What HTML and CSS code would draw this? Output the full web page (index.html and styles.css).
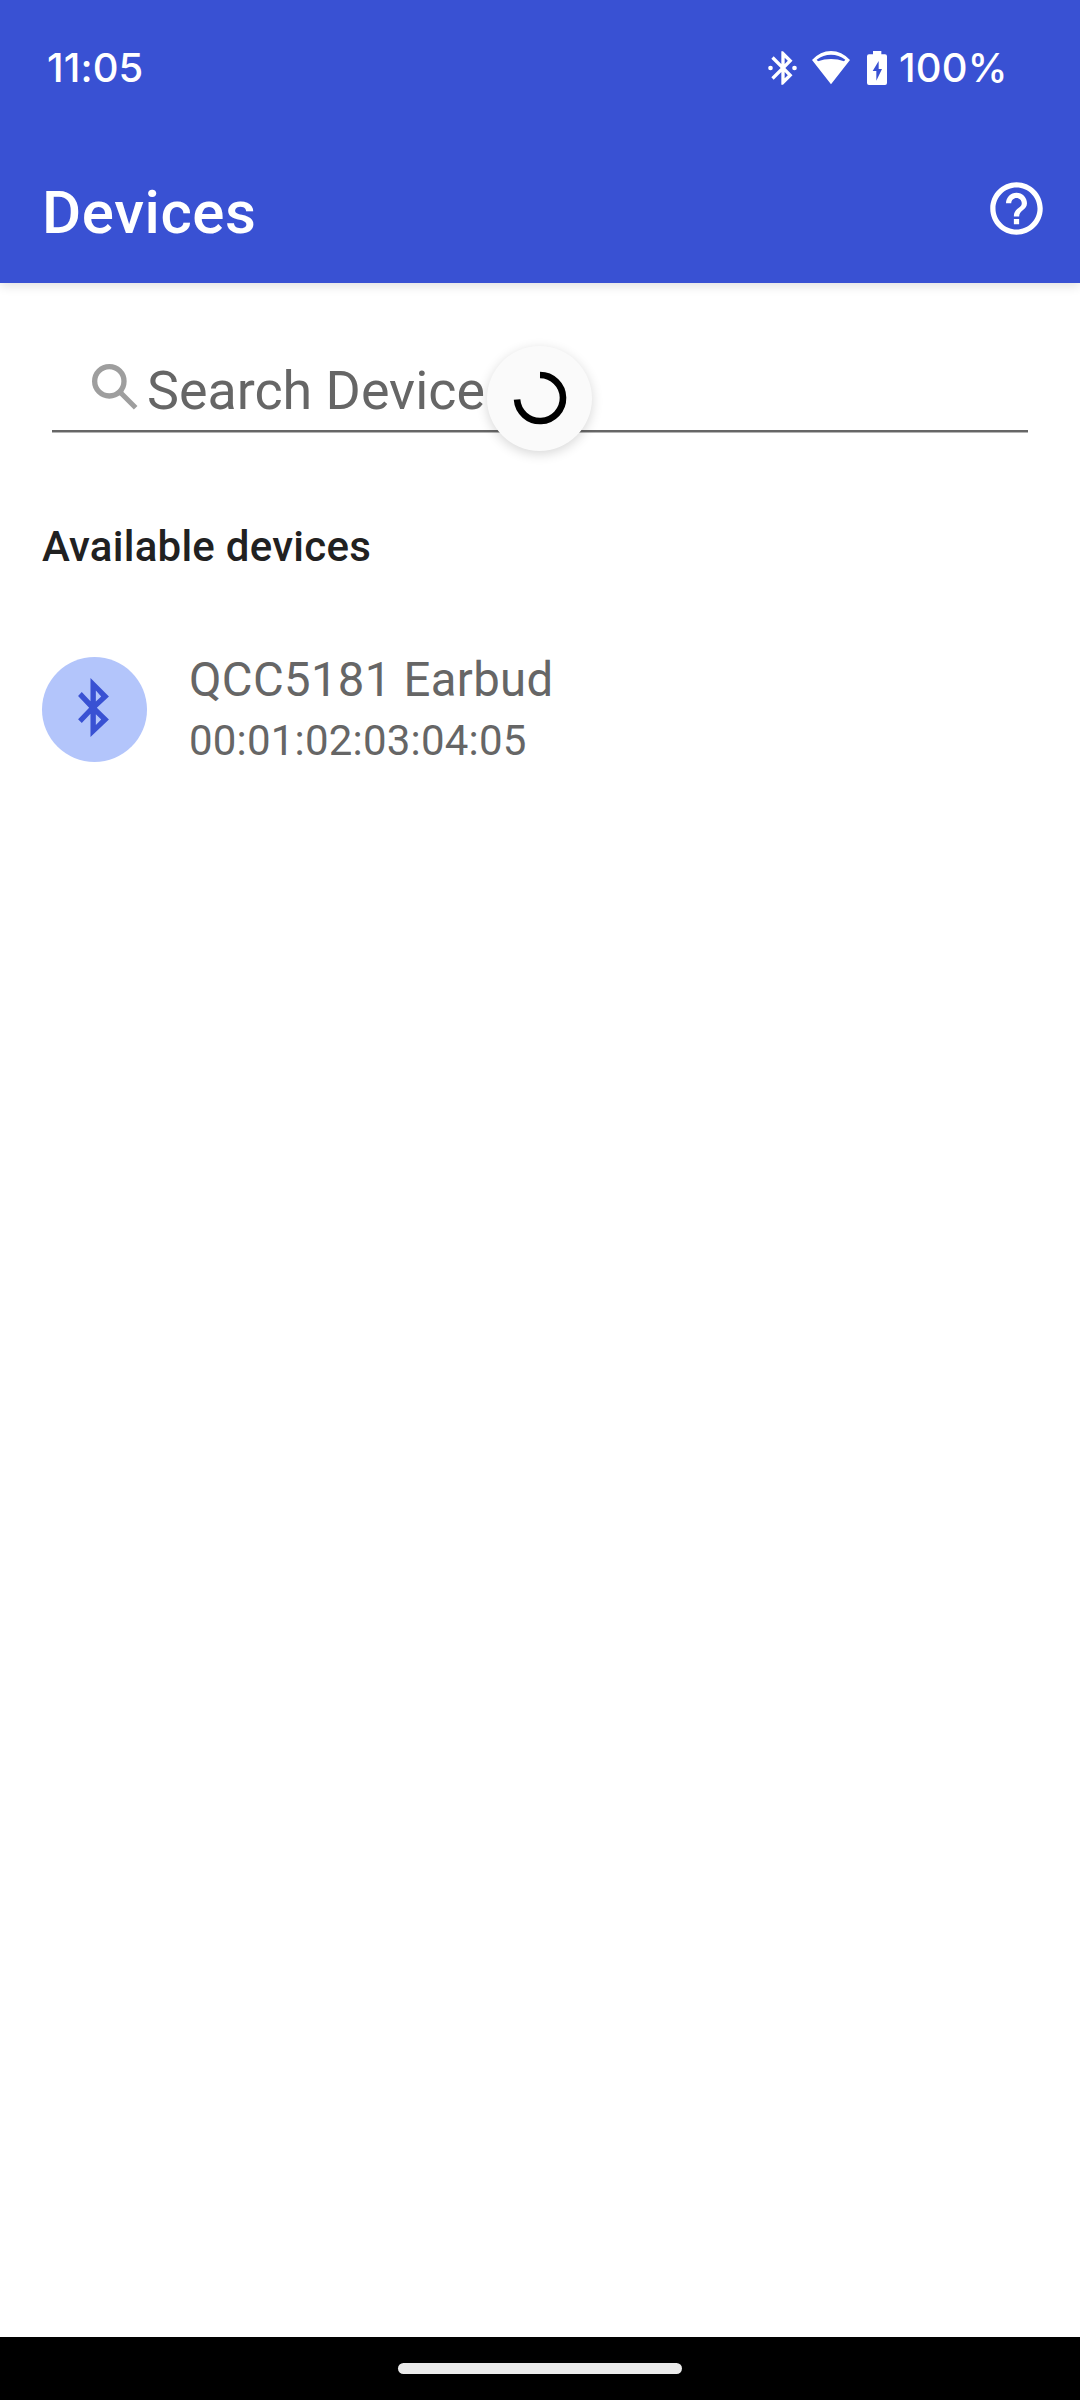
FILE: index.html
```html
<!DOCTYPE html>
<html lang="en">
<head>
<meta charset="utf-8">
<title>Devices</title>
<link rel="stylesheet" href="styles.css">
</head>
<body>
<div class="screen">
  <header class="header">
    <div class="status-bar">
      <span class="clock">11:05</span>
      <div class="status-icons">
        <svg class="status-bluetooth" viewBox="0 0 24 24"><path fill-rule="evenodd" d="M17.71 7.71L12 2h-1v7.59L6.41 5 5 6.41 10.59 12 5 17.59 6.41 19 11 14.41V22h1l5.71-5.71-4.3-4.29 4.3-4.29zM13 5.83l1.88 1.88L13 9.59V5.83zm1.88 10.46L13 18.17v-3.76l1.88 1.88z"/><circle cx="4.5" cy="12" r="1.4"/><circle cx="18.9" cy="12" r="1.4"/></svg>
        <svg class="status-wifi" viewBox="0 0 114 100"><path fill-rule="evenodd" d="M0 27Q25 0 57 0T114 27L57 100ZM18 31Q36 24 57 24T96 31L100 26Q80 11 57 11T14 26Z"/></svg>
        <svg class="status-battery" viewBox="0 0 60 102"><path fill-rule="evenodd" d="M18 0H43V10H54Q60 10 60 16V96Q60 102 54 102H6Q0 102 0 96V16Q0 10 6 10H18ZM35 30L17 60H28V89L45 54H35Z"/></svg>
        <span class="battery-level">100%</span>
      </div>
    </div>
    <div class="app-bar">
      <h1 class="title">Devices</h1>
      <svg class="help" viewBox="0 0 24 24"><path d="M11 18h2v-2h-2v2zm1-16C6.48 2 2 6.48 2 12s4.48 10 10 10 10-4.48 10-10S17.52 2 12 2zm0 18c-4.41 0-8-3.59-8-8s3.59-8 8-8 8 3.59 8 8-3.59 8-8 8zm0-14c-2.21 0-4 1.79-4 4h2c0-1.1.9-2 2-2s2 .9 2 2c0 2-3 1.75-3 5h2c0-2.25 3-2.5 3-5 0-2.21-1.79-4-4-4z"/></svg>
    </div>
  </header>
  <main class="content">
    <div class="search">
      <svg class="search-icon" viewBox="0 0 138 138"><circle cx="52" cy="52" r="44"/><path d="M82 82L90 90"/><path class="handle" d="M89 89L131 131"/></svg>
      <span class="search-hint">Search Device</span>
      <div class="spinner"><svg viewBox="0 0 54 54"><path d="M27 4A23 23 0 1 1 4.06 28.6"/></svg></div>
    </div>
    <h2 class="section-title">Available devices</h2>
    <div class="device">
      <div class="avatar"><svg viewBox="0 0 92 176"><path fill-rule="evenodd" d="M37 0L92 55 56 89 92 124 37 176V107L11 134 0 123 33 89 0 54 11 42 37 69ZM53 37V70L69 55ZM53 108V140L69 124Z"/></svg></div>
      <div class="device-text">
        <div class="device-name">QCC5181 Earbud</div>
        <div class="device-address">00:01:02:03:04:05</div>
      </div>
    </div>
  </main>
  <footer class="nav-bar"><div class="nav-handle"></div></footer>
</div>
</body>
</html>
```
FILE: styles.css
```css
* { box-sizing: border-box; }
body { margin: 0; font-family: Roboto, sans-serif; }
svg { display: block; flex: none; }
h1, h2 { margin: 0; }
.screen { width: 1080px; height: 2400px; display: flex; flex-direction: column; background: #fff; }
.header { height: 283px; flex: none; background: #3951d3; color: #fff; fill: #fff; box-shadow: 0 3px 10px rgba(0, 0, 0, .12); }
.status-bar { height: 136px; padding: 0 75px 0 47px; display: flex; justify-content: space-between; font: 500 40px/136px Inter, sans-serif; }
.clock { letter-spacing: .1px; }
.status-icons { display: flex; align-items: center; }
.status-bluetooth { width: 40px; height: 40px; }
.status-wifi { width: 38px; height: 33.3px; margin-left: 9px; }
.status-battery { width: 20px; height: 34px; margin-left: 17px; }
.battery-level { width: 106px; margin-left: 12px; white-space: nowrap; letter-spacing: .2px; }
.app-bar { height: 147px; padding: 0 32px 0 42px; display: flex; align-items: center; justify-content: space-between; }
.title { padding-top: 6px; font-size: 60px; font-weight: 500; line-height: 70px; letter-spacing: .6px; }
.help { width: 63px; height: 63px; margin-top: -2px; }
.content { flex: 1; padding: 42px 42px 0; }
.search { position: relative; height: 108px; margin: 0 10px; padding-left: 40px; display: flex; border-bottom: 1px solid #b5b5b5; box-shadow: inset 0 -2px #666; }
.search-icon { width: 46px; height: 46px; margin-top: 39px; fill: none; stroke: #9e9e9e; stroke-width: 16; }
.search-icon .handle { stroke-width: 15; }
.search-hint { margin: 34px 0 0 9px; font-size: 53.8px; line-height: 64px; color: #666; }
.spinner { position: absolute; left: 435px; top: 20.5px; width: 105px; height: 105px; border-radius: 50%; background: #fafafa; box-shadow: 0 3px 12px rgba(0, 0, 0, .16); display: flex; align-items: center; justify-content: center; }
.spinner svg { width: 54px; height: 54px; fill: none; stroke: #000; stroke-width: 6.6; }
.section-title { margin-top: 84px; font-size: 42px; font-weight: 500; line-height: 60px; letter-spacing: .25px; color: #212121; }
.device { margin-top: 68px; display: flex; align-items: flex-start; color: #666; }
.avatar { width: 105px; height: 105px; margin-top: 12px; padding: 21px 0 0 36px; border-radius: 50%; background: #b3c5fb; fill: #3951d3; }
.avatar svg { width: 31px; height: 59px; }
.device-text { margin-left: 42px; }
.device-name { font-size: 47.25px; line-height: 70px; letter-spacing: .33px; }
.device-address { margin-top: -1px; font-size: 42px; line-height: 54px; letter-spacing: .2px; }
.nav-bar { height: 63px; flex: none; padding-top: 26px; background: #000; }
.nav-handle { width: 284px; height: 11px; margin: 0 auto; border-radius: 6px; background: #ebebeb; }
```
